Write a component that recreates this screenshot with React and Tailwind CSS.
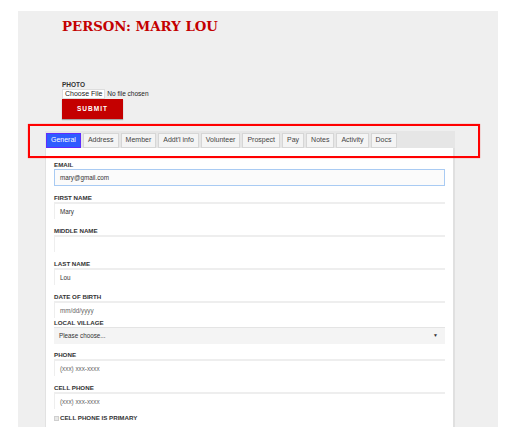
import React from "react";

const tabs = ["General", "Address", "Member", "Addt'l info", "Volunteer", "Prospect", "Pay", "Notes", "Activity", "Docs"];

function Label({ children }) {
  return (
    <div className="h-[8px] text-[6.2px] leading-[8px] font-bold text-[#333] uppercase">{children}</div>
  );
}

function TextField({ label, value, muted, mb = "mb-[8px]" }) {
  return (
    <div className={mb}>
      <Label>{label}</Label>
      <div className="h-[17px] bg-white border-t-2 border-l border-[#eeeeee] flex items-center pl-[5px]">
        <span className={`text-[6.3px] ${muted ? "text-[#666]" : "text-[#333]"}`}>{value}</span>
      </div>
    </div>
  );
}

export default function App() {
  return (
    <div className="relative w-[511px] h-[439px] bg-white overflow-hidden" style={{ fontFamily: '"Liberation Sans", Arial, sans-serif' }}>
      <div className="absolute left-[18px] top-[11px] w-[480px] h-[416px] bg-[#efefef] overflow-hidden">
        {/* header */}
        <div className="pl-[44px] pt-[6px]">
          <h1
            className="text-[13.3px] leading-[20px] font-extrabold text-[#c40000]"
            style={{ fontFamily: '"DejaVu Serif", "Liberation Serif", serif' }}
          >
            PERSON: MARY LOU
          </h1>
        </div>

        {/* photo upload */}
        <div className="pl-[44px] mt-[43px]">
          <div className="text-[6.5px] leading-[9px] font-bold text-[#333]">PHOTO</div>
          <div className="flex items-center h-[10px] gap-[2px]">
            <span className="bg-white border border-[#ddd] text-[7px] leading-[8px] px-[2px] text-[#222]">Choose File</span>
            <span className="text-[6.5px] text-[#222]">No file chosen</span>
          </div>
          <button className="block w-[61px] h-[20px] bg-[#c40000] text-white text-[6.5px] font-bold tracking-[1px] shadow-[0_1px_1px_rgba(0,0,0,0.3)]">
            SUBMIT
          </button>
        </div>

        {/* tab container */}
        <div className="ml-[27px] mt-[12px] w-[410px]">
          <div className="h-[17px] bg-[#e6e6e6] flex items-end gap-[2px] pl-[1px]">
            {tabs.map((t, i) => (
              <div
                key={t}
                className={
                  i === 0
                    ? "h-[15px] px-[4px] flex items-center text-[7px] bg-[#2f5cff] border border-[#5e2cff] text-white"
                    : "h-[15px] px-[4px] flex items-center text-[7px] bg-[#f4f4f4] border border-[#d6d6d6] text-[#444]"
                }
              >
                {t}
              </div>
            ))}
          </div>

          <div className="bg-white border-l border-[#e2e2e2] border-r-2 border-r-[#e0e0e0] h-[300px] pl-[8px] pr-[8px] pt-[13px]">
            <div className="mb-[8px]">
              <Label>Email</Label>
              <div className="h-[17px] bg-[#fbfbfb] border border-[#a9cbf3] flex items-center pl-[5px]">
                <span className="text-[6.3px] text-[#333]">mary@gmail.com</span>
              </div>
            </div>
            <TextField label="First Name" value="Mary" />
            <TextField label="Middle Name" value="" />
            <TextField label="Last Name" value="Lou" />
            <TextField label="Date of Birth" value="mm/dd/yyyy" muted mb="mb-[1px]" />
            <div className="mb-[7px]">
              <Label>Local Village</Label>
              <div className="h-[17px] bg-[#f4f4f4] border-t border-[#e4e4e4] flex items-center justify-between pl-[5px] pr-[7px]">
                <span className="text-[6.3px] text-[#333]">Please choose...</span>
                <span className="text-[5px] text-[#333]">▼</span>
              </div>
            </div>
            <TextField label="Phone" value="(xxx) xxx-xxxx" muted />
            <TextField label="Cell Phone" value="(xxx) xxx-xxxx" muted mb="mb-[5px]" />
            <div className="flex items-center gap-[1px] h-[8px]">
              <span className="w-[5px] h-[5px] bg-[#e8e8e8] border border-[#cfcfcf]" />
              <span className="text-[6.2px] font-bold text-[#333]">CELL PHONE IS PRIMARY</span>
            </div>
          </div>
        </div>
      </div>

      {/* annotation box */}
      <div className="absolute left-[28px] top-[124px] w-[452px] h-[34px] border-2 border-[#ff0000] shadow-[0_0_1px_rgba(255,0,0,0.6)]" />
    </div>
  );
}
